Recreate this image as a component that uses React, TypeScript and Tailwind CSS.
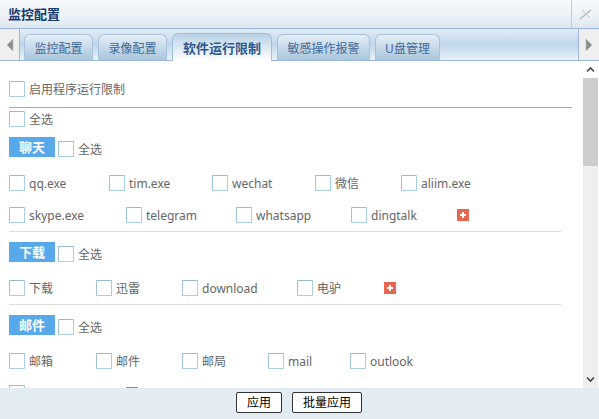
const font = "font-['Noto_Sans','Noto_Sans_CJK_SC',sans-serif]";

const tabs = [
  { label: "监控配置", width: "w-[69px]" },
  { label: "录像配置", width: "w-[69px]" },
  { label: "软件运行限制", width: "w-[100px]", active: true },
  { label: "敏感操作报警", width: "w-[93px]" },
  { label: "U盘管理", width: "w-[65px]" },
];

const Checkbox = () => (
  <span className="block w-[16px] h-[16px] shrink-0 bg-white border border-[#a9cfe2] border-l-[#9fc3d8] border-t-[#98bcd2] rounded-[1px]" />
);

const Check = ({ label, width }: { label: string; width?: string }) => (
  <label className={`flex items-center gap-[4px] h-[16px] text-[12px] text-[#666] whitespace-nowrap shrink-0 ${width ?? ""}`}>
    <Checkbox />
    <span className="pt-[2px]">{label}</span>
  </label>
);

const Plus = () => (
  <span className="relative block w-[12px] h-[12px] bg-[#e8654e] shrink-0">
    <span className="absolute left-[3px] top-[5px] w-[6px] h-[2px] bg-white" />
    <span className="absolute left-[5px] top-[3px] w-[2px] h-[6px] bg-white" />
  </span>
);

const GroupHead = ({ title, className }: { title: string; className: string }) => (
  <div className={`flex items-end ${className}`}>
    <span className="w-[46px] h-[20px] leading-[21px] text-center bg-[#58a9e9] text-white text-[13px] font-bold mr-[3px]">
      {title}
    </span>
    <Check label="全选" />
  </div>
);

const ArrowButton = ({ dir }: { dir: "left" | "right" }) => (
  <div
    className={`h-full flex items-center justify-center bg-[#efefef] border-[#9db8dc] ${
      dir === "left" ? "w-[20px] border-r" : "w-[21px] border-l"
    }`}
  >
    <svg width="8" height="14" viewBox="0 0 8 14">
      {dir === "left" ? (
        <path d="M7 1v12L1 7z" fill="#8a9088" stroke="#b4b8b2" strokeWidth="0.6" />
      ) : (
        <path d="M1 1v12l6-6z" fill="#8a9088" stroke="#b4b8b2" strokeWidth="0.6" />
      )}
    </svg>
  </div>
);

const App = () => {
  return (
    <div className={`w-[599px] h-[419px] overflow-hidden flex flex-col bg-white ${font}`}>
      {/* title bar */}
      <div className="h-[29px] shrink-0 flex items-center justify-between bg-gradient-to-b from-[#f6f9fc] via-[#eef3f8] to-[#dde7f1] border-b border-[#9db8dc]">
        <span className="pl-[8px] pt-[2px] text-[13px] font-bold text-[#17386b]">监控配置</span>
        <div className="w-[28px] h-full border-l border-[#c0ccd8] flex items-center justify-center">
          <svg width="14" height="12" viewBox="0 0 14 12">
            <path d="M1 11L12 2" stroke="#b4babd" strokeWidth="1.5" fill="none" />
            <path d="M3 2l3 3M8 7l3 3" stroke="#ccd2d5" strokeWidth="1.2" fill="none" />
          </svg>
        </div>
      </div>

      {/* tabs */}
      <div className="h-[32px] shrink-0 flex border-b border-[#9db8dc] bg-gradient-to-b from-[#e3edf6] via-[#bfd6ea] to-[#eaf2f9]">
        <ArrowButton dir="left" />
        <div className="flex-1 flex items-end pl-[4px] gap-[5px]">
          {tabs.map((tab) =>
            tab.active ? (
              <div
                key={tab.label}
                className={`${tab.width} h-[28px] pt-[2px] -mb-[1px] flex items-center justify-center rounded-t-[6px] border border-b-0 border-[#a3bedb] bg-gradient-to-b from-[#b9d2e6] to-[#ffffff] text-[13px] font-bold text-[#2f5a8f]`}
              >
                {tab.label}
              </div>
            ) : (
              <div
                key={tab.label}
                className={`${tab.width} h-[26px] pt-[2px] flex items-center justify-center rounded-t-[6px] border border-b-0 border-[#a9c2dc] bg-gradient-to-b from-[#e4eef6] to-[#a9c6dc] text-[12px] text-[#3f6a9a]`}
              >
                {tab.label}
              </div>
            ),
          )}
        </div>
        <ArrowButton dir="right" />
      </div>

      {/* body */}
      <div className="flex-1 min-h-0 flex">
        <div className="w-[583px] overflow-hidden pl-[9px] pt-[20px]">
          <Check label="启用程序运行限制" />
          <div className="w-[563px] h-[1px] bg-[#82b7c7] mt-[10px]" />
          <div className="mt-[3px]">
            <Check label="全选" />
          </div>

          <GroupHead title="聊天" className="mt-[10px]" />
          <div className="flex items-center mt-[18px]">
            <Check label="qq.exe" width="w-[100px]" />
            <Check label="tim.exe" width="w-[103px]" />
            <Check label="wechat" width="w-[103px]" />
            <Check label="微信" width="w-[86px]" />
            <Check label="aliim.exe" />
          </div>
          <div className="flex items-center mt-[16px]">
            <Check label="skype.exe" width="w-[117px]" />
            <Check label="telegram" width="w-[110px]" />
            <Check label="whatsapp" width="w-[115px]" />
            <Check label="dingtalk" width="w-[106px]" />
            <Plus />
          </div>
          <div className="w-[552px] h-[1px] bg-[#dcdcdc] mt-[8px]" />

          <GroupHead title="下载" className="mt-[10px]" />
          <div className="flex items-center mt-[18px]">
            <Check label="下载" width="w-[87px]" />
            <Check label="迅雷" width="w-[86px]" />
            <Check label="download" width="w-[115px]" />
            <Check label="电驴" width="w-[87px]" />
            <Plus />
          </div>
          <div className="w-[552px] h-[1px] bg-[#dcdcdc] mt-[8px]" />

          <GroupHead title="邮件" className="mt-[10px]" />
          <div className="flex items-center mt-[18px]">
            <Check label="邮箱" width="w-[87px]" />
            <Check label="邮件" width="w-[86px]" />
            <Check label="邮局" width="w-[86px]" />
            <Check label="mail" width="w-[82px]" />
            <Check label="outlook" />
          </div>
          <div className="flex items-center mt-[16px]">
            <Check label="" width="w-[117px]" />
            <Plus />
          </div>
        </div>

        {/* scrollbar */}
        <div className="w-[15px] flex flex-col bg-[#efefef]">
          <div className="h-[17px] bg-white flex items-center justify-center">
            <svg width="9" height="7" viewBox="0 0 9 7">
              <path d="M1 5.5l3.5-3.5 3.5 3.5" stroke="#444" strokeWidth="1.6" fill="none" />
            </svg>
          </div>
          <div className="h-[88px] bg-[#cdcdcd]" />
          <div className="flex-1" />
          <div className="h-[17px] flex items-center justify-center">
            <svg width="9" height="7" viewBox="0 0 9 7">
              <path d="M1 1.5l3.5 3.5 3.5-3.5" stroke="#444" strokeWidth="1.6" fill="none" />
            </svg>
          </div>
        </div>
        <div className="w-[1px]" />
      </div>

      {/* footer */}
      <div className="h-[31px] shrink-0 flex items-center justify-center gap-[10px] bg-[#e3ebf3] pr-[1px] pb-[2px]">
        <button className="w-[46px] h-[21px] pt-[1px] bg-white border border-[#333] rounded-[2px] text-[12px] text-black leading-none">
          应用
        </button>
        <button className="w-[70px] h-[21px] pt-[1px] bg-white border border-[#333] rounded-[2px] text-[12px] text-black leading-none">
          批量应用
        </button>
      </div>
    </div>
  );
};

export default App;
